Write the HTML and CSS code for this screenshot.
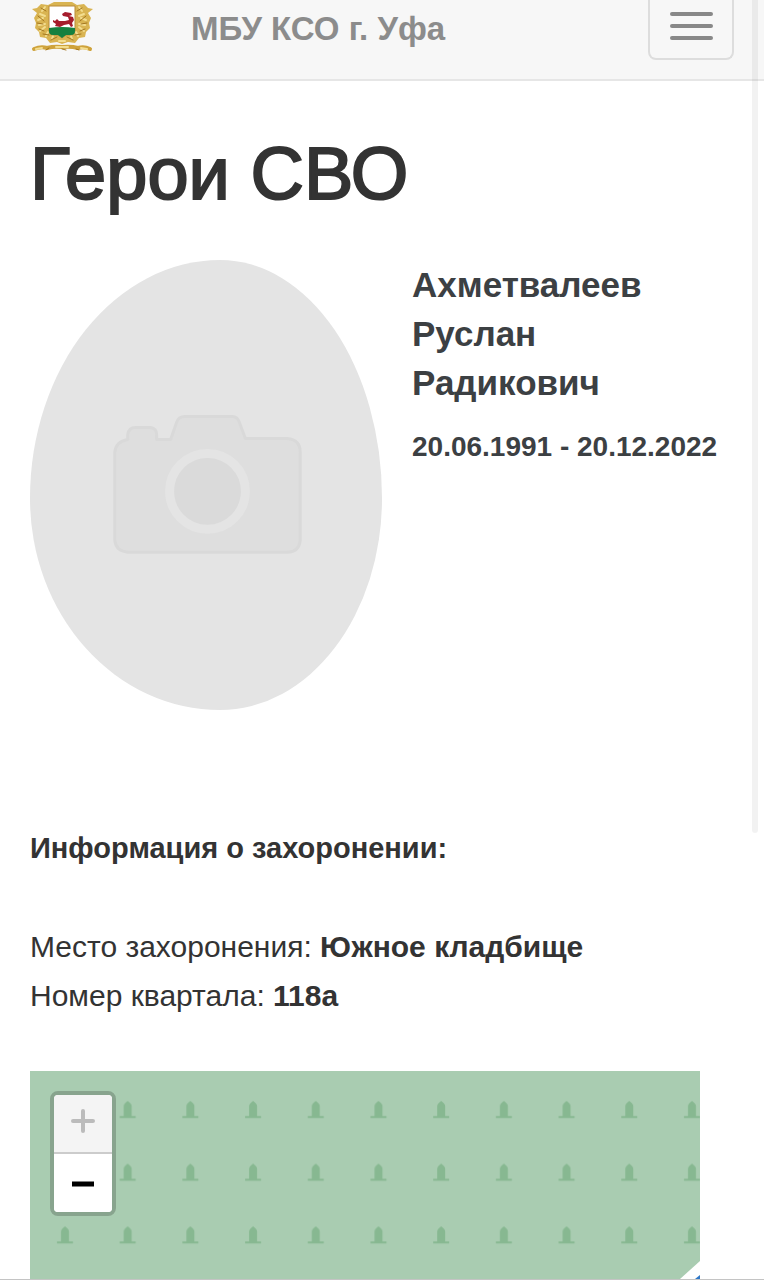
FILE: index.html
```html
<!DOCTYPE html>
<html lang="ru">
<head>
<meta charset="utf-8">
<meta name="viewport" content="width=device-width">
<title>Герои СВО</title>
<link rel="stylesheet" href="styles.css">
</head>
<body>
<header class="navbar">
  <a class="logo" href="#" aria-label="Главная">
    <svg width="62" height="54" viewBox="0 0 62 54">
      <path fill="#d9b452" d="M17 5 10 4 6 8 1 9l5 4-3 5 2 5-1 5 4 4 1 5 6 1 4 5 7-1 5 2 6-2 7 1 4-5 6-1 1-5 4-4-1-5 2-5-3-5 5-4-5-1-4-4-7 1-5-3H23z"/>
      <path fill="none" stroke="#cfa33c" stroke-width="4" stroke-linecap="round" d="M3 49q7-3 13-1 7-2 15-1 9-1 16 1 6-2 12 1"/>
      <g fill="none" stroke="#f3dd8f" stroke-width="2" stroke-linecap="round">
        <path d="M14 7l-3 4M9 14l5 2M7 20l5-2M8 25l6-1M9 31l5-4M15 36l2-4M21 39l1-3M48 7l3 4M53 14l-5 2M55 20l-5-2M54 25l-6-1M53 31l-5-4M47 36l-2-4M41 39l-1-3M28 41h6M5 49l6-1M25 47h12M50 48l6 1"/>
      </g>
      <g fill="none" stroke="#a3761f" stroke-width="1" stroke-linecap="round">
        <path d="M10 8l5 3M7 16l6 5M6 23l6 1M8 29l5 2M12 34l6 1M20 40l6-3M51 8l-5 3M55 16l-6 5M56 23l-6 1M54 29l-5 2M50 34l-6 1M42 40l-6-3M15 50l3-2M31 49l4 1M45 49l3 1"/>
      </g>
      <path fill="#fff" stroke="#b98a36" d="M18 6h26v25q0 4-4 4h-5l-4 3-4-3h-5q-4 0-4-4z"/>
      <path fill="#15803f" d="M18 28q13-2 26 0v3q0 4-4 4h-5l-4 3-4-3h-5q-4 0-4-4z"/>
      <path fill="#a51c2c" d="M22 20l2 1 2-2 2 2h6l4-1-1-3-5-1-1-2 3-2 6 1 1 2-3 1 4 1 1 3-2 3 1 3-2 1-2-3-5 1-4 2-5-1 1-2-3-2z"/>
    </svg>
  </a>
  <a class="brand" href="#">МБУ КСО г. Уфа</a>
  <button class="toggle" type="button" aria-label="Меню"><span class="bar"></span><span class="bar"></span><span class="bar"></span></button>
</header>
<main class="content">
  <h1 class="title">Герои СВО</h1>
  <section class="person">
    <div class="photo">
      <svg class="camera" viewBox="0 0 353 451" role="img" aria-label="Нет фотографии">
        <path d="M98 180V175Q99 168 106 168H121Q127 169 127 175V180H141L147 163Q149 157 155 157H203Q208 157 210 163L216 179H258Q271 180 271 193V281Q270 293 258 293H98Q86 292 85 281V193Q86 182 98 180Z" fill="#dedede" stroke="#d9d9d9" stroke-width="3" stroke-linejoin="round"/>
        <circle cx="178" cy="232" r="38" fill="#dadada" stroke="#e4e4e4" stroke-width="9"/>
      </svg>
    </div>
    <div class="details">
      <h2 class="name">Ахметвалеев<br>Руслан<br>Радикович</h2>
      <p class="dates">20.06.1991 - 20.12.2022</p>
    </div>
  </section>
  <section class="burial">
    <h3 class="subtitle">Информация о захоронении:</h3>
    <p class="line">Место захоронения: <b>Южное кладбище</b></p>
    <p class="line">Номер квартала: <b>118а</b></p>
  </section>
  <div class="map">
    <svg class="tiles" aria-hidden="true">
      <defs>
        <pattern id="graves" x="4" y="7" width="62.7" height="62.7" patternUnits="userSpaceOnUse">
          <path fill="#87b891" d="M27 38V28q0-2 4-5 4 3 4 5v10h4v2H23v-2z"/>
        </pattern>
      </defs>
      <rect width="100%" height="100%" fill="url(#graves)"/>
    </svg>
    <svg class="corner" viewBox="0 0 20 18" aria-hidden="true">
      <path fill="#fff" d="M20 0V18H0z"/>
      <path fill="#2f78c8" d="M20 14V18H15z"/>
    </svg>
    <div class="zoom">
      <button class="zoom-button" type="button" aria-label="Приблизить" disabled><svg width="24" height="24" viewBox="0 0 24 24"><path d="M12 2v20M2 12h20" stroke="#bbb" stroke-width="4" stroke-linecap="round"/></svg></button>
      <button class="zoom-button" type="button" aria-label="Отдалить"><svg width="24" height="24" viewBox="0 0 24 24"><path d="M1 13h22" stroke="#000" stroke-width="5"/></svg></button>
    </div>
  </div>
</main>
<div class="scroll-thumb"></div>
</body>
</html>
```
FILE: styles.css
```css
* { box-sizing: border-box; }
body {
  margin: 0;
  position: relative;
  border-bottom: 1px solid #c4c4c4;
  background: #fff;
  color: #333;
  font: 30px/49px "Liberation Sans", Arial, sans-serif;
}
h1, h2, h3, p { margin: 0; }
.navbar {
  display: flex;
  align-items: flex-start;
  height: 81px;
  padding: 0 30px 0 31px;
  background: #f7f7f7;
  border-bottom: 2px solid #e6e6e6;
}
.logo { width: 160px; height: 54px; }
.logo svg { display: block; }
.brand {
  padding-top: 4px;
  color: #8c8c8c;
  font-size: 33px;
  font-weight: bold;
  text-decoration: none;
}
.toggle {
  display: flex;
  flex-direction: column;
  align-items: center;
  justify-content: flex-end;
  gap: 8px;
  width: 86px;
  height: 60px;
  margin-left: auto;
  padding: 0 0 18px;
  background: none;
  border: 2px solid #ddd;
  border-top: 0;
  border-radius: 0 0 8px 8px;
}
.bar {
  width: 43px;
  height: 4px;
  border-radius: 2px;
  background: #888;
}
.content { padding: 54px 30px 0; }
.title {
  font-size: 74px;
  font-weight: normal;
  line-height: 78px;
  -webkit-text-stroke: 2px #333;
}
.person {
  display: grid;
  grid-template-columns: 1fr 1fr;
  align-items: start;
  margin-top: 47px;
}
.photo {
  width: 100%;
  aspect-ratio: 353 / 451;
  overflow: hidden;
  background: #e4e4e4;
  border-radius: 54% 46% 46% 54% / 53% 53% 47% 47%;
}
.camera { display: block; width: 100%; }
.details { padding-left: 30px; color: #3c4043; }
.name { font-size: 35px; line-height: 49px; }
.dates {
  margin-top: 15px;
  font-size: 28px;
  font-weight: bold;
  white-space: nowrap;
}
.burial { margin-top: 114px; }
.subtitle {
  margin-bottom: 49px;
  font-size: 29px;
  line-height: 49px;
}
.map {
  position: relative;
  height: 208px;
  margin: 51px 34px 0 0;
  background: #a9ccb1;
}
.tiles { display: block; width: 100%; height: 100%; }
.corner {
  position: absolute;
  right: 0;
  bottom: 0;
  width: 20px;
  height: 18px;
}
.zoom {
  position: absolute;
  top: 20px;
  left: 20px;
  display: flex;
  flex-direction: column;
  width: 66px;
  overflow: hidden;
  background: #fff;
  border: 4px solid #88a48e;
  border-radius: 8px;
}
.zoom-button {
  display: flex;
  align-items: center;
  justify-content: center;
  height: 58px;
  padding: 0;
  border: 0;
  background: #fff;
}
.zoom-button:disabled {
  height: 59px;
  padding-bottom: 4px;
  background: #f4f4f4;
  border-bottom: 2px solid #ccc;
}
.scroll-thumb {
  position: absolute;
  top: 0;
  right: 6px;
  width: 6px;
  height: 833px;
  border-radius: 0 0 3px 3px;
  background: rgba(0, 0, 0, .05);
}
```
